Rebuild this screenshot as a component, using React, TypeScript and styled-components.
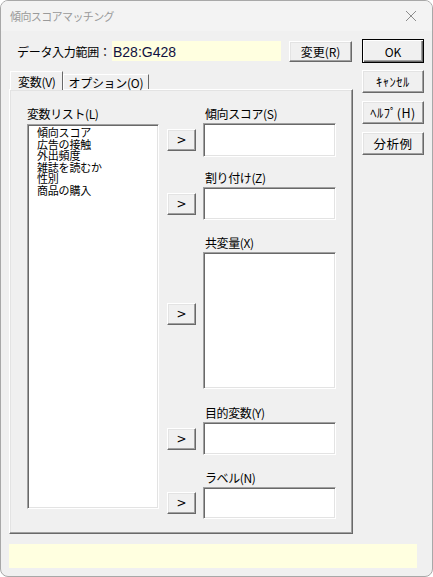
import React from "react";
import styled, { createGlobalStyle, css } from "styled-components";

const GlobalStyle = createGlobalStyle`
  html, body {
    margin: 0;
    padding: 0;
    background: #ffffff;
  }
  body {
    font-family: "Noto Sans CJK JP", "Noto Sans", sans-serif;
    font-size: 12px;
    color: #000;
  }
`;

const raised = css`
  border: 1px solid;
  border-color: #ffffff #696969 #696969 #ffffff;
  box-shadow: inset -1px -1px #a0a0a0, inset 1px 1px #e3e3e3;
`;

const sunken = css`
  border: 1px solid;
  border-color: #a0a0a0 #ffffff #ffffff #a0a0a0;
  box-shadow: inset 1px 1px #696969, inset -1px -1px #e3e3e3;
`;

const slots = [
  { label: "傾向スコア(S)", top: 0, height: 34 },
  { label: "割り付け(Z)", top: 13, height: 33 },
  { label: "共変量(X)", top: 15, height: 137, btnTop: 51 },
  { label: "目的変数(Y)", top: 16, height: 33 },
  { label: "ラベル(N)", top: 15, height: 32 },
];

const variables = ["傾向スコア", "広告の接触", "外出頻度", "雑誌を読むか", "性別", "商品の購入"];

export default function App() {
  return (
    <>
      <GlobalStyle />
      <Window>
        <TitleBar>
          <Title>傾向スコアマッチング</Title>
          <CloseIcon width="12" height="12" viewBox="0 0 12 12">
            <path d="M1 1 L11 11 M11 1 L1 11" stroke="#8c8c8c" strokeWidth="1" />
          </CloseIcon>
        </TitleBar>
        <Body>
          <Main>
            <RangeRow>
              <RangeLabel>データ入力範囲：</RangeLabel>
              <RangeField>B28:G428</RangeField>
              <PushButton $w={63} $h={21}>変更(R)</PushButton>
            </RangeRow>
            <TabStrip>
              <Tab $active>変数(V)</Tab>
              <Tab>オプション(O)</Tab>
            </TabStrip>
            <TabPanel>
              <ListColumn>
                <FieldLabel>変数リスト(L)</FieldLabel>
                <ListBox>
                  {variables.map((v) => (
                    <ListItem key={v}>{v}</ListItem>
                  ))}
                </ListBox>
              </ListColumn>
              <SlotColumn>
                {slots.map((s) => (
                  <Slot key={s.label} $top={s.top}>
                    <FieldLabel $indent>{s.label}</FieldLabel>
                    <SlotRow>
                      <ArrowButton $top={s.btnTop}>&gt;</ArrowButton>
                      <DropField $h={s.height} />
                    </SlotRow>
                  </Slot>
                ))}
              </SlotColumn>
            </TabPanel>
          </Main>
          <SideButtons>
            <DefaultButton>OK</DefaultButton>
            <SideButton>ｷｬﾝｾﾙ</SideButton>
            <SideButton>ﾍﾙﾌﾟ(H)</SideButton>
            <SideButton>分析例</SideButton>
          </SideButtons>
          <StatusBar />
        </Body>
      </Window>
    </>
  );
}

const Window = styled.div`
  box-sizing: border-box;
  width: 433px;
  height: 577px;
  border: 1px solid #a8a8a8;
  border-radius: 8px;
  overflow: hidden;
  background: #f0f0f0;
  display: flex;
  flex-direction: column;
`;

const TitleBar = styled.div`
  height: 30px;
  background: #f3f3f3;
  display: flex;
  align-items: center;
  justify-content: space-between;
  padding: 0 15px 0 9px;
`;

const Title = styled.span`
  font-size: 11px;
  letter-spacing: -0.6px;
  color: #9a9a9a;
  margin-top: -1px;
`;

const CloseIcon = styled.svg`
  display: block;
`;

const Body = styled.div`
  flex: 1;
  display: grid;
  grid-template-columns: 344px 62px;
  grid-template-rows: 1fr 24px;
  column-gap: 9px;
  row-gap: 9px;
  padding: 8px 8px 8px 8px;
`;

const Main = styled.div`
  display: flex;
  flex-direction: column;
`;

const RangeRow = styled.div`
  height: 24px;
  display: flex;
  align-items: center;
  padding-left: 8px;
`;

const RangeLabel = styled.span`
  width: 95px;
  font-size: 12px;
  letter-spacing: -0.3px;
`;

const RangeField = styled.div`
  width: 168px;
  height: 20px;
  line-height: 22px;
  background: #ffffe0;
  padding-left: 1px;
  font-family: "Liberation Sans", Arial, sans-serif;
  font-size: 14px;
  color: #101040;
  margin-right: 8px;
`;

const PushButton = styled.div<{ $w: number; $h: number }>`
  ${raised};
  box-sizing: border-box;
  width: ${({ $w }) => $w}px;
  height: ${({ $h }) => $h}px;
  background: #f0f0f0;
  display: flex;
  align-items: center;
  justify-content: center;
  font-size: 12px;
`;

const SideButton = styled(PushButton).attrs({ $w: 62, $h: 23 })`
  font-size: 12.5px;
  letter-spacing: 0.5px;
`;

const DefaultButton = styled.div`
  box-sizing: border-box;
  width: 62px;
  height: 24px;
  border: 1px solid #000;
  background: #f0f0f0;
  display: flex;
  align-items: center;
  justify-content: center;
  font-size: 12px;
  box-shadow: inset 1px 1px #ffffff, inset -1px -1px #696969, inset -2px -2px #a0a0a0;
`;

const SideButtons = styled.div`
  display: flex;
  flex-direction: column;
  gap: 8px;
  & > :nth-child(2) {
    margin-top: -1px;
  }
`;

const TabStrip = styled.div`
  margin-top: 8px;
  height: 18px;
  display: flex;
  align-items: flex-end;
  padding-left: 1px;
  position: relative;
  z-index: 1;
`;

const Tab = styled.div<{ $active?: boolean }>`
  box-sizing: border-box;
  border: 1px solid;
  border-bottom: none;
  border-color: #ffffff #696969 transparent #ffffff;
  background: #f0f0f0;
  font-size: 12px;
  letter-spacing: -0.3px;
  padding: 0 5px;
  display: flex;
  align-items: center;
  ${({ $active }) =>
    $active
      ? css`
          height: 19px;
          margin-bottom: -1px;
          padding: 0 6px 0 7px;
        `
      : css`
          height: 15px;
          line-height: 15px;
        `}
`;

const TabPanel = styled.div`
  ${raised};
  box-sizing: border-box;
  height: 445px;
  display: flex;
  gap: 8px;
  padding: 16px 0 0 17px;
`;

const ListColumn = styled.div`
  display: flex;
  flex-direction: column;
`;

const FieldLabel = styled.div<{ $indent?: boolean }>`
  height: 15px;
  line-height: 15px;
  font-size: 12px;
  letter-spacing: -0.4px;
  margin-bottom: 2px;
  padding-left: ${({ $indent }) => ($indent ? "38px" : "0")};
`;

const ListBox = styled.div`
  ${sunken};
  box-sizing: border-box;
  margin-top: 1px;
  width: 132px;
  height: 385px;
  background: #ffffff;
  padding: 2px 0 0 9px;
`;

const ListItem = styled.div`
  font-size: 11px;
  line-height: 11.5px;
  letter-spacing: -0.2px;
`;

const SlotColumn = styled.div`
  display: flex;
  flex-direction: column;
`;

const Slot = styled.div<{ $top: number }>`
  margin-top: ${({ $top }) => $top}px;
`;

const SlotRow = styled.div`
  display: flex;
  align-items: center;
  gap: 7px;
`;

const ArrowButton = styled.div<{ $top?: number }>`
  ${raised};
  box-sizing: border-box;
  width: 29px;
  height: 22px;
  background: #f0f0f0;
  display: flex;
  align-items: center;
  justify-content: center;
  font-family: "DejaVu Sans", sans-serif;
  font-size: 12px;
  ${({ $top }) =>
    $top !== undefined &&
    css`
      align-self: flex-start;
      margin-top: ${$top}px;
    `}
`;

const DropField = styled.div<{ $h: number }>`
  ${sunken};
  box-sizing: border-box;
  width: 133px;
  height: ${({ $h }) => $h}px;
  background: #ffffff;
`;

const StatusBar = styled.div`
  grid-column: 1 / span 2;
  width: 408px;
  height: 24px;
  background: #ffffe0;
`;
